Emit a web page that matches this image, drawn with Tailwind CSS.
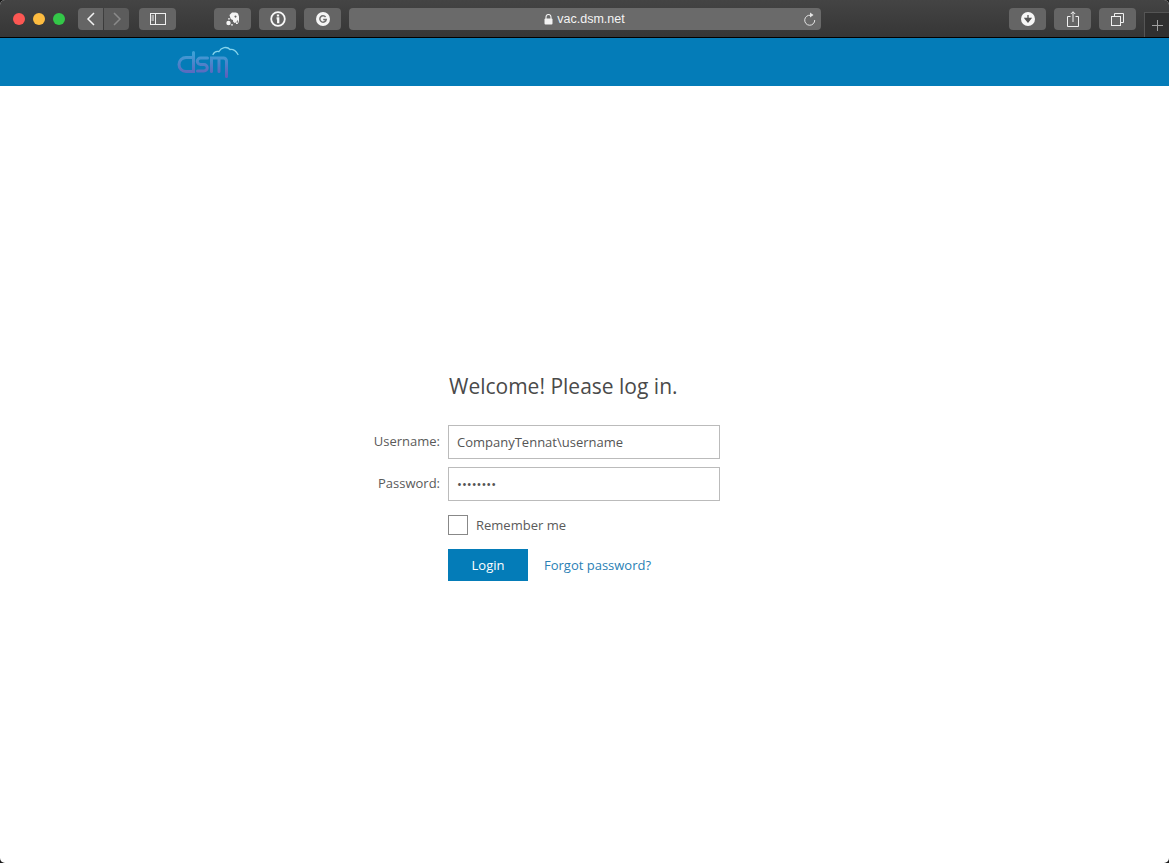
<!DOCTYPE html>
<html lang="en">
<head>
  <meta charset="UTF-8" />
  <title>Login</title>
  <script src="https://cdn.jsdelivr.net/npm/@tailwindcss/browser@4"></script>
</head>
<body class="h-[863px] w-[1169px] overflow-hidden bg-[#1a1a1a] font-['Open_Sans',sans-serif] text-[#444]">
  <div class="h-[863px] overflow-hidden rounded-[5px] bg-white">
  <!-- browser toolbar -->
  <div class="relative flex h-[38px] items-start border-b border-black bg-gradient-to-b from-[#444444] to-[#363636] pt-2">
    <div class="ml-[13px] flex gap-2 pt-[5px]">
      <span class="size-3 rounded-full bg-[#fc5753]"></span>
      <span class="size-3 rounded-full bg-[#fdbc40]"></span>
      <span class="size-3 rounded-full bg-[#33c748]"></span>
    </div>
    <button class="ml-[13px] flex h-[22px] w-[25px] items-center justify-center rounded-l-[4px] bg-[#656565]">
      <svg width="10" height="14" viewBox="0 0 10 14" fill="none" stroke="#f2f2f2" stroke-width="1.5"><path d="M8 1 2 7l6 6" /></svg>
    </button>
    <button class="ml-px flex h-[22px] w-[25px] items-center justify-center rounded-r-[4px] bg-[#5c5c5c]">
      <svg width="10" height="14" viewBox="0 0 10 14" fill="none" stroke="#8a8a8a" stroke-width="1.5"><path d="m2 1 6 6-6 6" /></svg>
    </button>
    <button class="ml-[10px] flex h-[22px] w-[37px] items-center justify-center rounded-[4px] bg-[#656565]">
      <svg width="16" height="12" viewBox="0 0 16 12" fill="none" stroke="#f0f0f0"><rect x="0.5" y="0.5" width="15" height="11" /><path d="M5.5 0.5v11" /><path d="M1.5 3h2.5M1.5 5h2.5M1.5 7h2.5" /></svg>
    </button>
    <button class="ml-[38px] flex h-[22px] w-[37px] items-center justify-center rounded-[4px] bg-[#656565]">
      <svg width="14" height="14" viewBox="0 0 14 14" fill="#f4f4f4">
        <path fill-rule="evenodd" d="M3.500 3 5 1.500 6 .5h4l2 1 1 3v4l-.5 2-1 1.500H10V10.500L8.500 11 7 9.500V8L5.500 7.500 4.500 6.500zM9.500 3.500a1 1 0 1 0 .01 0zM11 8.500l-.5 2 1 .5.5-2.500z" />
        <circle cx="2.500" cy="11" r="2.200" />
        <circle cx="3" cy="6.800" r=".9" />
        <circle cx="6" cy="12.800" r=".9" />
      </svg>
    </button>
    <button class="ml-2 flex h-[22px] w-[37px] items-center justify-center rounded-[4px] bg-[#656565]">
      <svg width="16" height="16" viewBox="0 0 16 16" fill="none"><circle cx="8" cy="8" r="6.800" stroke="#f8f8f8" stroke-width="1.800" /><path d="M8 3.600v2M6.600 7.300H8.200v5" stroke="#f8f8f8" stroke-width="2.300" /></svg>
    </button>
    <button class="ml-2 flex h-[22px] w-[37px] items-center justify-center rounded-[4px] bg-[#656565]">
      <svg width="14" height="14" viewBox="0 0 14 14"><circle cx="7" cy="7" r="7" fill="#f6f6f6" /><path d="M9.600 5A3.200 3.200 0 1 0 10.200 7.500H7.200" fill="none" stroke="#707070" stroke-width="1.500" /></svg>
    </button>
    <div class="relative ml-2 flex h-[22px] w-[472px] items-center justify-center rounded-[4px] bg-[#6a6a6a]">
      <svg class="mr-[4px] -ml-px" width="9" height="11" viewBox="0 0 9 11" fill="#f2f2f2"><rect x="0.500" y="4.500" width="8" height="6" rx="1" /><path d="M2 5V3a2.500 2.500 0 0 1 5 0v2" fill="none" stroke="#f2f2f2" stroke-width="1.100" /></svg>
      <span class="font-['Liberation_Sans',sans-serif] text-[12.500px] font-medium text-[#f4f4f4]">vac.dsm.net</span>
      <svg class="absolute right-[5px] top-[4px]" width="13" height="14" viewBox="0 0 13 14" fill="none" stroke="#e4e4e4"><path d="M7.500 3.300a5 5 0 1 0 4.200 4.700" /><path d="M7 .5 10.500 3 7 5.500z" fill="#e4e4e4" stroke="none" /></svg>
    </div>
    <button class="ml-[188px] flex h-[22px] w-[37px] items-center justify-center rounded-[4px] bg-[#656565]">
      <svg width="14" height="14" viewBox="0 0 14 14"><circle cx="7" cy="7" r="7" fill="#f6f6f6" /><path d="M7 3v5.500M4.200 6.500 7 10l2.800-3.500z" fill="#555" stroke="#555" stroke-width="1.300" /></svg>
    </button>
    <button class="ml-2 flex h-[22px] w-[37px] items-center justify-center rounded-[4px] bg-[#656565]">
      <svg width="12" height="16" viewBox="0 0 12 16" fill="none" stroke="#f0f0f0"><path d="M3.500 5.500h-3v10h11v-10h-3" /><path d="M6 11V.8M3.800 3 6 .8 8.200 3" /></svg>
    </button>
    <button class="ml-2 flex h-[22px] w-[37px] items-center justify-center rounded-[4px] bg-[#656565]">
      <svg width="13" height="13" viewBox="0 0 13 13" fill="none" stroke="#f0f0f0"><rect x="0.500" y="3.500" width="9" height="9" /><path d="M3.500 3.500v-3h9v9h-3" /></svg>
    </button>
    <!-- new tab button sits over the toolbar edge -->
    <div class="absolute bottom-0 right-0 flex h-[25px] w-[25px] items-center justify-center border-l border-t border-[#555] bg-[#303030]">
      <svg width="11" height="11" viewBox="0 0 11 11" stroke="#a0a0a0"><path d="M5.500 0v11M0 5.500h11" /></svg>
    </div>
  </div>

  <!-- site header -->
  <header class="h-[48px] bg-[#047cb8] pl-[177px] pt-[8px]">
    <svg width="62" height="32" viewBox="0 0 62 32" fill="none" stroke-linecap="round">
      <defs>
        <linearGradient id="dsm" gradientUnits="userSpaceOnUse" x1="0" y1="8" x2="0" y2="30">
          <stop offset="0" stop-color="#3f9fd6" />
          <stop offset="1" stop-color="#5f60ba" />
        </linearGradient>
      </defs>
      <path d="M36 8.500c1-2.500 3.500-3.500 6-3 2-4 8-5.500 11-2 3-.5 6 1.500 8 5" stroke="#86d4ec" stroke-width="1.300" />
      <path d="M16.500 6.500v19H9a7 7 0 0 1 0-14h7.500" stroke="url(#dsm)" stroke-width="3" />
      <path d="M30.500 12h-7a3 3 0 0 0 0 6.500h3.500a3.200 3.200 0 0 1 0 6.500h-6.500" stroke="url(#dsm)" stroke-width="3" />
      <path d="M34.500 25.500V12H46.500a3 3 0 0 1 3 3V30.500M42 12V25.500" stroke="url(#dsm)" stroke-width="3" />
    </svg>
  </header>

  <!-- login form -->
  <main class="ml-[360px] w-[360px] pt-[286px]">
    <h1 class="pl-[89px] text-[21px] leading-[28px] text-[#4a4a4a]">Welcome! Please log in.</h1>
    <form class="mt-[25px] grid grid-cols-[80px_272px] items-center gap-x-2 gap-y-2 text-[13px]">
      <label class="text-right text-[#5a5a5a]">Username:</label>
      <input class="h-[34px] border border-[#bbb] px-2 text-[13px] text-[#555]" type="text" value="CompanyTennat\username" />
      <label class="text-right text-[#5a5a5a]">Password:</label>
      <input class="h-[34px] border border-[#bbb] px-2 text-[13px] text-[#555]" type="password" value="password" />
      <div class="col-start-2 mt-[6px] flex items-center gap-2">
        <span class="size-5 border border-[#888] bg-white"></span>
        <span class="relative top-px text-[#5a5a5a]">Remember me</span>
      </div>
      <div class="col-start-2 mt-[6px] flex items-center gap-4">
        <button class="h-[32px] w-[80px] bg-[#047cb8] pt-0.5 text-[13px] text-white" type="button">Login</button>
        <a class="relative top-px text-[#2a7fb5]" href="#">Forgot password?</a>
      </div>
    </form>
  </main>
  </div>
</body>
</html>
